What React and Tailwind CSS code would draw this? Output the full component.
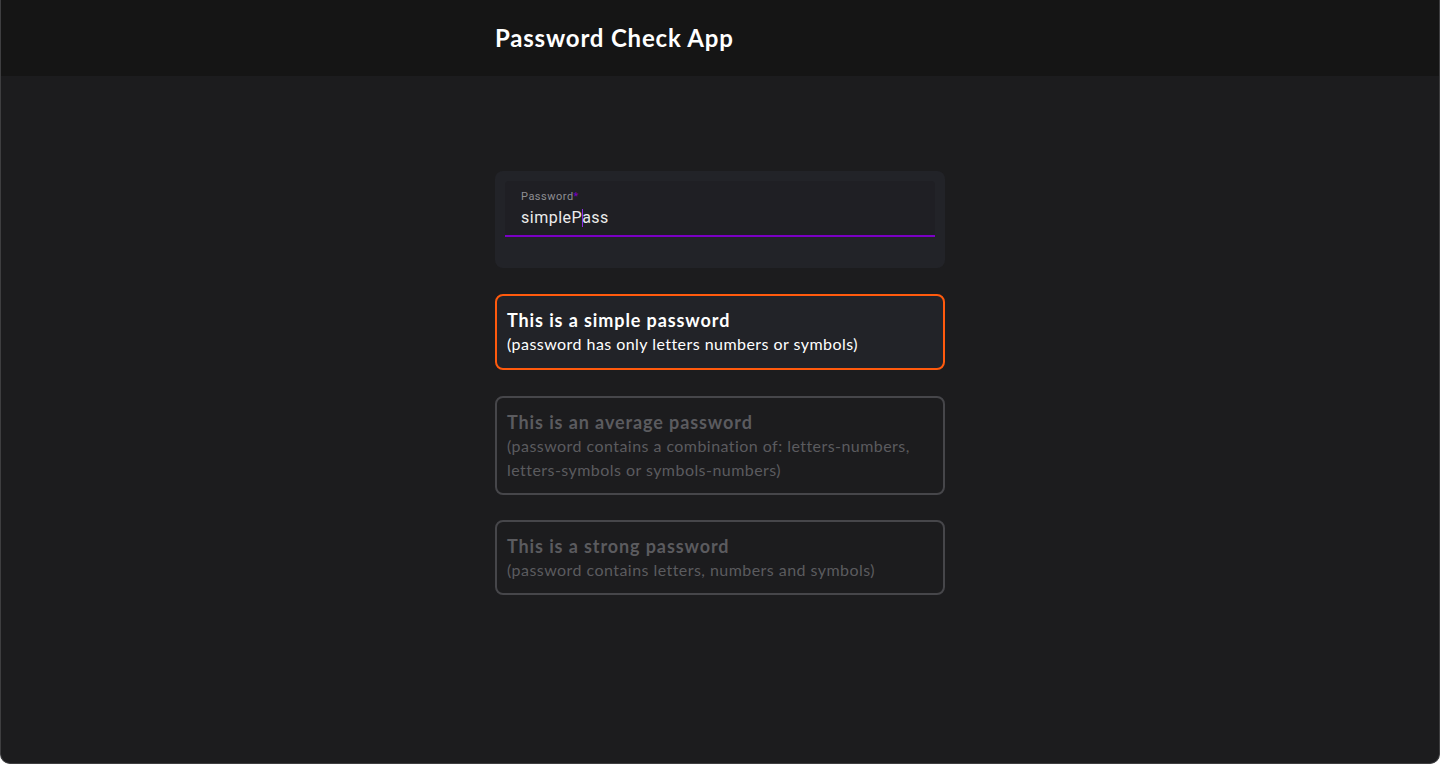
import { useState } from "react";

const levels = [
    {
        title: "This is a simple password",
        desc: "(password has only letters numbers or symbols)",
    },
    {
        title: "This is an average password",
        desc: "(password contains a combination of: letters-numbers, letters-symbols or symbols-numbers)",
    },
    {
        title: "This is a strong password",
        desc: "(password contains letters, numbers and symbols)",
    },
];

export default function App() {
    const [value] = useState("simplePass");
    const active = 0;

    return (
        <div className="h-[764px] w-full overflow-hidden bg-[#1c1c1e] border border-t-0 border-[#3e3e40] rounded-b-[10px] font-['Lato','Open_Sans',sans-serif]">
            <header className="h-[76px] bg-[#151515] flex items-center">
                <div className="w-[450px] mx-auto">
                    <h1 className="text-white text-[24px] font-bold tracking-[0.8px]">Password Check App</h1>
                </div>
            </header>

            <main className="w-[450px] mx-auto pt-[95px] flex flex-col">
                <div className="bg-[#222328] rounded-[8px] px-[10px] pt-[10px] pb-[31px] mb-[26px]">
                    <div className="bg-[#1f1f24] rounded-t-[4px] h-[56px] px-4 pt-[9px] border-b-2 border-[#7a00c4] font-['Roboto',sans-serif]">
                        <div className="text-[11px] leading-[14px] text-[#8e8e93] tracking-[0.5px]">
                            Password<span className="text-[#7a00c4]">*</span>
                        </div>
                        <div className="text-[16px] leading-[22px] mt-[3px] text-[#ececec] tracking-[0.5px] flex items-center">
                            <span>{value.slice(0, 7)}</span>
                            <span className="inline-block w-px h-[18px] bg-[#8a2be2] -mr-px"></span>
                            <span>{value.slice(7)}</span>
                        </div>
                    </div>
                </div>

                {levels.map((level, i) => (
                    <div
                        key={i}
                        className={
                            i === active
                                ? "border-2 border-[#ff5a0d] bg-[#222328] rounded-[8px] px-[10px] py-3 mb-[26px]"
                                : "border-2 border-[#46464a] rounded-[8px] px-[10px] pt-3 pb-[11px] mb-[25px]"
                        }
                    >
                        <div className={i === active ? "text-white text-[18px] font-bold leading-6 tracking-[0.9px]" : "text-[#5b5b5f] text-[18px] font-bold leading-6 tracking-[0.9px]"}>
                            {level.title}
                        </div>
                        <div className={i === active ? "text-white text-[16px] leading-6 tracking-[0.45px]" : "text-[#5b5b5f] text-[16px] leading-6 tracking-[0.45px]"}>
                            {level.desc}
                        </div>
                    </div>
                ))}
            </main>
        </div>
    );
}
